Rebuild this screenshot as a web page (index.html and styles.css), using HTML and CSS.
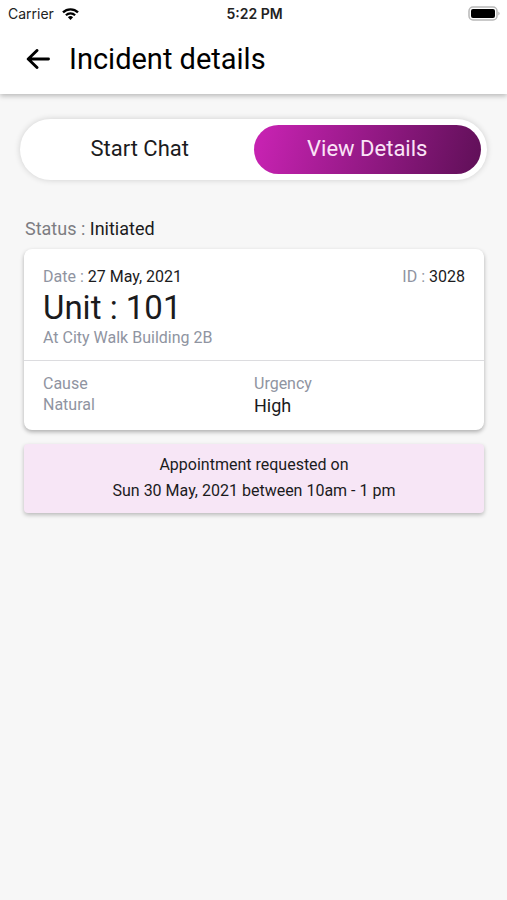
FILE: index.html
```html
<!DOCTYPE html>
<html lang="en">
<head>
<meta charset="utf-8">
<meta name="viewport" content="width=device-width, initial-scale=1">
<title>Incident details</title>
<link rel="stylesheet" href="styles.css">
</head>
<body>
<header class="top">
  <div class="statusbar">
    <div class="carrier">
      <span>Carrier</span>
      <svg class="wifi" viewBox="0 0 17 12" aria-hidden="true">
        <path d="M8.500 12 L5.900 9.300 A3.700 3.700 0 0 1 11.100 9.300 Z" fill="#000"/>
        <path d="M3.900 7.300 A6.500 6.500 0 0 1 13.100 7.300" fill="none" stroke="#000" stroke-width="2.200"/>
        <path d="M1 4.400 A10.600 10.600 0 0 1 16 4.400" fill="none" stroke="#000" stroke-width="2.300"/>
      </svg>
    </div>
    <span class="clock">5:22 PM</span>
    <svg class="battery" viewBox="0 0 33 15" aria-hidden="true">
      <rect x="1" y="1" width="28" height="13" rx="4" fill="#fff" stroke="#b8b8b8" stroke-width="1.500"/>
      <rect x="3" y="3" width="24" height="9" rx="2" fill="#000"/>
      <path d="M30.500 5.500 Q32.500 7.500 30.500 9.500 Z" fill="#999"/>
    </svg>
  </div>
  <div class="titlebar">
    <button class="back" type="button" aria-label="Back">
      <svg viewBox="0 0 24 20" aria-hidden="true">
        <path d="M22.500 10 H2.500 M11 1.500 L2.200 10 L11 18.500" fill="none" stroke="#000" stroke-width="2.900" stroke-linecap="round" stroke-linejoin="round"/>
      </svg>
    </button>
    <h1>Incident details</h1>
  </div>
</header>
<main>
  <nav class="switch">
    <button type="button" class="option">Start Chat</button>
    <button type="button" class="option active">View Details</button>
  </nav>
  <p class="status"><span class="muted">Status :</span> Initiated</p>
  <section class="card">
    <div class="summary">
      <div class="meta">
        <span><span class="label">Date :</span> 27 May, 2021</span>
        <span><span class="label">ID :</span> 3028</span>
      </div>
      <h2>Unit : 101</h2>
      <p class="label">At City Walk Building 2B</p>
    </div>
    <dl class="facts">
      <div>
        <dt>Cause</dt>
        <dd class="label">Natural</dd>
      </div>
      <div>
        <dt>Urgency</dt>
        <dd class="strong">High</dd>
      </div>
    </dl>
  </section>
  <section class="notice">
    <p>Appointment requested on</p>
    <p>Sun 30 May, 2021 between 10am - 1 pm</p>
  </section>
</main>
</body>
</html>
```
FILE: styles.css
```css
* {
  box-sizing: border-box;
}

body {
  margin: 0;
  min-height: 100vh;
  background: #f7f7f7;
  color: #1b1b1d;
  font-family: Roboto, "Liberation Sans", sans-serif;
  font-size: 16px;
  line-height: 20px;
}

h1, h2, p, dl, dd {
  margin: 0;
  font-weight: 400;
}

button {
  border: 0;
  padding: 0;
  background: none;
  color: inherit;
  font: inherit;
}

.top {
  background: #fff;
  box-shadow: 0 2px 5px rgba(0, 0, 0, 0.25);
}

.statusbar {
  display: grid;
  grid-template-columns: 1fr auto 1fr;
  align-items: center;
  height: 27px;
  padding: 0 6px 0 8px;
  font-family: Inter, "Liberation Sans", sans-serif;
  font-size: 14px;
  color: #222;
}

.carrier {
  display: flex;
  align-items: center;
  gap: 8px;
}

.wifi {
  width: 17px;
  height: 12px;
}

.clock {
  font-weight: 600;
}

.battery {
  justify-self: end;
  width: 33px;
  height: 15px;
}

.titlebar {
  display: flex;
  align-items: center;
  gap: 19px;
  height: 67px;
  padding: 0 26px 3px;
}

.back svg {
  display: block;
  width: 24px;
  height: 20px;
}

h1 {
  font-size: 29px;
  line-height: 36px;
  color: #000;
}

main {
  padding: 25px 23px 24px 24px;
}

.switch {
  display: grid;
  grid-template-columns: 1fr 1fr;
  margin: 0 -3px 0 -4px;
  padding: 6px;
  border-radius: 31px;
  background: #fff;
  box-shadow: 0 0 6px rgba(0, 0, 0, 0.16);
}

.option {
  height: 49px;
  padding-bottom: 2px;
  border-radius: 25px;
  font-size: 22px;
}

.option.active {
  background: linear-gradient(105deg, #c522b0 5%, #611059 98%);
  color: #fbe4f7;
}

.status {
  padding: 38px 0 9px 1px;
  font-size: 18px;
  line-height: 22px;
}

.muted {
  color: #7d7d82;
}

.label, dt {
  color: #8f94a1;
}

.card {
  border-radius: 8px;
  background: #fff;
  box-shadow: 0 2px 4px rgba(0, 0, 0, 0.3);
}

.summary {
  padding: 18px 19px 12px;
  border-bottom: 1px solid #dcdcdf;
}

.meta {
  display: flex;
  justify-content: space-between;
}

h2 {
  font-size: 33px;
  line-height: 41px;
}

.facts {
  display: grid;
  grid-template-columns: 1fr 1fr;
  padding: 12px 19px;
  line-height: 21px;
}

.strong {
  font-size: 18px;
  line-height: 24px;
}

.notice {
  margin-top: 14px;
  padding: 8px 16px 9px;
  border-radius: 4px;
  background: #f7e6f6;
  box-shadow: 0 2px 4px rgba(0, 0, 0, 0.25);
  text-align: center;
  line-height: 26px;
}
```
